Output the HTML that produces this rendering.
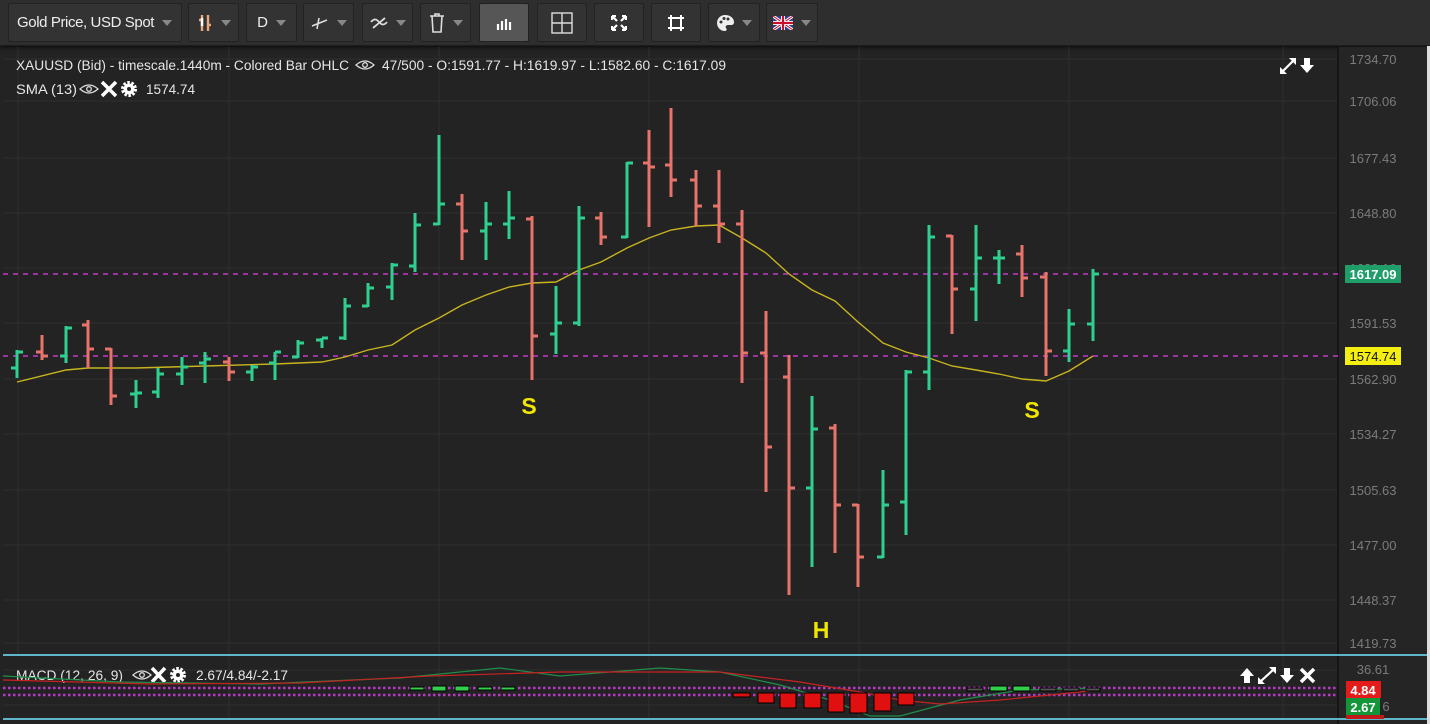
<!DOCTYPE html>
<html><head><meta charset="utf-8"><style>
*{margin:0;padding:0;box-sizing:border-box}
body{width:1430px;height:724px;background:#232323;overflow:hidden;font-family:"Liberation Sans",sans-serif;position:relative}
.tb{position:absolute;left:0;top:0;width:1430px;height:46px;background:#2e2e2e;border-bottom:1px solid #1c1c1c;box-shadow:0 2px 3px #111}
.b{position:absolute;top:3px;height:39px;background:#333;border:1px solid #222;border-radius:2px;color:#eee;font-size:15px;display:flex;align-items:center;justify-content:center}
.car{display:inline-block;width:0;height:0;border-left:5px solid transparent;border-right:5px solid transparent;border-top:6px solid #888;margin-left:8px}
.rs{position:absolute;right:0;top:46px;width:3px;height:678px;background:#ddd}
</style></head><body>
<div class="tb">
<div class="b" style="left:8px;width:174px;justify-content:flex-start;padding-left:8px;letter-spacing:-0.4px">Gold Price, USD Spot<span class="car"></span></div>
<div class="b" style="left:188px;width:51px"><svg width="16" height="18"><path d="M5 1V17M11 1V17M2 6H5M11 11H14" stroke="#e9a77a" stroke-width="2.4"/><path d="M5 4V12" stroke="#fff" stroke-width="2.4"/></svg><span class="car"></span></div>
<div class="b" style="left:246px;width:51px">D<span class="car"></span></div>
<div class="b" style="left:303px;width:51px"><svg width="18" height="14"><path d="M1 10L16 4M8 2L6 13" stroke="#ddd" stroke-width="1.6"/></svg><span class="car"></span></div>
<div class="b" style="left:362px;width:51px"><svg width="18" height="14"><path d="M1 6Q5 1 9 6T17 6M3 12L15 2" stroke="#ddd" stroke-width="1.8" fill="none"/></svg><span class="car"></span></div>
<div class="b" style="left:420px;width:51px"><svg width="16" height="20"><path d="M1 3H15M3 3L4 19H12L13 3M6 3V1H10V3" stroke="#ddd" stroke-width="1.6" fill="none"/></svg><span class="car"></span></div>
<div class="b" style="left:479px;width:50px;background:#565656"><svg width="16" height="14"><path d="M2 8V14M6 5V14M10 3V14M14 6V14" stroke="#fff" stroke-width="2.2"/></svg></div>
<div class="b" style="left:537px;width:50px"><svg width="22" height="22"><rect x="1" y="1" width="20" height="20" fill="none" stroke="#ddd" stroke-width="1.4"/><path d="M11 1V21M1 11H21" stroke="#ddd" stroke-width="1.4"/></svg></div>
<div class="b" style="left:594px;width:50px"><svg width="16" height="16"><path d="M1 1L6 6M15 1L10 6M1 15L6 10M15 15L10 10M1 1H5M1 1V5M15 1H11M15 1V5M1 15H5M1 15V11M15 15H11M15 15V11" stroke="#fff" stroke-width="2.2"/></svg></div>
<div class="b" style="left:651px;width:50px"><svg width="18" height="18"><rect x="4" y="4" width="10" height="10" fill="none" stroke="#fff" stroke-width="2"/><path d="M1 4H4V1M14 1V4H17M17 14H14V17M4 17V14H1" stroke="#fff" stroke-width="2" fill="none"/></svg></div>
<div class="b" style="left:708px;width:52px"><svg width="18" height="18"><path d="M9 1C4 1 1 5 1 9s3 8 8 8c2 0 2-2 1-3s0-3 2-3h3c2 0 3-1 3-3C18 4 14 1 9 1z" fill="#eee"/><circle cx="5" cy="8" r="1.5" fill="#333"/><circle cx="8" cy="4.5" r="1.5" fill="#333"/><circle cx="12" cy="5" r="1.5" fill="#333"/></svg><span class="car"></span></div>
<div class="b" style="left:766px;width:52px"><svg width="20" height="14"><rect width="20" height="14" fill="#27408b"/><path d="M0 0L20 14M20 0L0 14" stroke="#fff" stroke-width="3"/><path d="M0 0L20 14M20 0L0 14" stroke="#c8102e" stroke-width="1"/><path d="M10 0V14M0 7H20" stroke="#fff" stroke-width="4"/><path d="M10 0V14M0 7H20" stroke="#c8102e" stroke-width="2.2"/></svg><span class="car"></span></div>
</div>
<svg width="1430" height="724" style="position:absolute;left:0;top:0" font-family="Liberation Sans,sans-serif">
<rect x="1338" y="47" width="90" height="677" fill="#252525"/>
<g stroke="#2f2f2f" stroke-width="1">
<path d="M3 59H1338M3 101H1338M3 158H1338M3 213H1338M3 268H1338M3 323H1338M3 379H1338M3 434H1338M3 490H1338M3 545H1338M3 600H1338M3 643H1338"/>
<path d="M18 47V655M229 47V655M439 47V655M649 47V655M859 47V655M1069 47V655M1283 47V655M229 657V718M439 657V718M649 657V718M859 657V718M1069 657V718M1283 657V718"/>
<path d="M3 670H1338M3 705H1338"/>
</g>
<path d="M1338 47V724" stroke="#111" stroke-width="1.5"/>
<g stroke="#c23bc8" stroke-width="1.6" stroke-dasharray="5 5"><path d="M3 274H1338M3 356H1338"/></g>
<polyline fill="none" stroke="#c8b41e" stroke-width="1.4" points="17,382 66,370 88,368 136,368 205,366 275,364 322,362 345,357 368,350 392,345 415,330 439,318 462,305 486,295 509,287 532,283 556,282 579,270 601,262 627,248 649,238 671,230 696,226 719,225 742,238 766,253 789,274 812,290 835,301 858,322 883,343 906,352 929,358 952,366 976,370 999,374 1022,379 1046,381 1069,371 1093,356"/>
<path fill="none" stroke="#2fd08f" stroke-width="3" d="M17 350V378M11 368h6M17 352h6M66 326V363M60 356h6M66 328h6M136 380V408M130 394h6M136 393h6M158 368V398M152 392h6M158 374h6M182 357V385M176 374h6M182 367h6M205 352V383M199 363h6M205 359h6M252 365V381M246 372h6M252 367h6M275 352V380M269 363h6M275 352h6M298 340V358M292 357h6M298 343h6M322 338V348M316 340h6M322 338h6M345 298V340M339 338h6M345 306h6M368 283V307M362 306h6M368 288h6M392 263V300M386 287h6M392 265h6M415 213V272M409 266h6M415 225h6M439 135V225M433 224h6M439 204h6M486 202V260M480 231h6M486 224h6M509 191V239M503 224h6M509 218h6M556 286V354M550 334h6M556 323h6M579 206V326M573 323h6M579 218h6M627 162V238M621 237h6M627 163h6M812 396V567M806 488h6M812 429h6M883 470V558M877 557h6M883 505h6M906 370V535M900 502h6M906 372h6M929 225V390M923 372h6M929 237h6M976 225V321M970 289h6M976 258h6M999 250V284M993 258h6M999 258h6M1069 309V362M1063 351h6M1069 324h6M1093 269V341M1087 324h6M1093 274h6"/>
<path fill="none" stroke="#e8736b" stroke-width="3" d="M42 335V360M36 352h6M42 356h6M88 320V368M82 325h6M88 349h6M111 348V405M105 349h6M111 396h6M229 357V381M223 362h6M229 372h6M462 194V260M456 204h6M462 231h6M532 216V380M526 219h6M532 336h6M601 212V245M595 218h6M601 237h6M649 130V227M643 163h6M649 167h6M671 108V197M665 165h6M671 180h6M696 170V226M690 180h6M696 206h6M719 170V243M713 206h6M719 224h6M742 210V383M736 224h6M742 353h6M766 311V492M760 353h6M766 447h6M789 355V595M783 377h6M789 488h6M835 424V553M829 428h6M835 505h6M858 504V587M852 505h6M858 557h6M952 235V334M946 236h6M952 289h6M1022 245V297M1016 254h6M1022 278h6M1046 272V376M1040 277h6M1046 351h6"/>
<g fill="#f2e600" font-weight="bold" font-size="23" text-anchor="middle"><text x="529" y="414">S</text><text x="1032" y="418">S</text><text x="821" y="638">H</text></g>
<g fill="#e6e6e6" font-size="13.5">
<text x="16" y="70" textLength="333" lengthAdjust="spacingAndGlyphs">XAUUSD (Bid) - timescale.1440m - Colored Bar OHLC</text>
<text x="382" y="70" textLength="344" lengthAdjust="spacingAndGlyphs">47/500 - O:1591.77 - H:1619.97 - L:1582.60 - C:1617.09</text>
<text x="16" y="94" textLength="61" lengthAdjust="spacingAndGlyphs">SMA (13)</text>
<text x="146" y="94" textLength="49" lengthAdjust="spacingAndGlyphs">1574.74</text>
<text x="16" y="680" textLength="107" lengthAdjust="spacingAndGlyphs">MACD (12, 26, 9)</text>
<text x="196" y="680" textLength="92" lengthAdjust="spacingAndGlyphs">2.67/4.84/-2.17</text>
</g>
<g fill="none" stroke="#ddd" stroke-width="1.3"><path d="M356 65Q365 57 374 65Q365 73 356 65Z"/><circle cx="365" cy="65" r="2.3"/><path d="M80 89Q89 81 98 89Q89 97 80 89Z"/><circle cx="89" cy="89" r="2.3"/><path d="M133 675Q142 667 151 675Q142 683 133 675Z"/><circle cx="142" cy="675" r="2.3"/></g>
<g stroke="#fff" stroke-width="3.5"><path d="M102 82L116 96M116 82L102 96M152 668L165 682M165 668L152 682M1301 669L1314 682M1314 669L1301 682"/></g>
<g fill="#fff"><circle cx="129" cy="89" r="5.5"/><circle cx="178" cy="675" r="5.5"/></g>
<g stroke="#fff" stroke-width="3" stroke-dasharray="2.5 1.6"><circle cx="129" cy="89" r="6.5" fill="none"/><circle cx="178" cy="675" r="6.5" fill="none"/></g>
<g fill="#222"><circle cx="129" cy="89" r="2"/><circle cx="178" cy="675" r="2"/></g>
<g fill="#fff">
<path d="M1280 74L1280 67L1287 74Z M1296 58L1296 65L1289 58Z"/>
<path d="M1304 58h6v7h4l-7 8l-7-8h4z"/>
<path d="M1250 683v-7h4l-7-8-7 8h4v7z"/>
<path d="M1258 684L1258 677L1265 684Z M1276 667L1276 674L1269 667Z"/>
<path d="M1284 668h6v7h4l-7 8-7-8h4z"/>
</g>
<g stroke="#fff" stroke-width="2.2"><path d="M1283 71L1293 61M1261 681L1273 670"/></g>
<path d="M3 655H1338M3 719H1338" stroke="#5fb6c8" stroke-width="2"/>
<path d="M1338 655H1428M1338 719H1428" stroke="#5fb6c8" stroke-width="2"/>
<g stroke="#b63ac2" stroke-width="2.5" stroke-dasharray="2.5 2.5"><path d="M3 688H1338M3 695H1338"/></g>
<polyline fill="none" stroke="#1f8e4a" stroke-width="1.2" points="3,676 120,682 260,684 400,678 500,668 560,676 660,668 720,672 780,685 830,700 870,716 900,716 960,700 1020,690 1100,688"/>
<polyline fill="none" stroke="#c62222" stroke-width="1.2" points="3,680 150,684 300,683 430,676 560,672 720,672 800,682 860,692 900,700 940,704 1000,700 1100,690"/>
<g fill="#e01010" stroke="#000" stroke-width="1"><rect x="733" y="693" width="17" height="4"/><rect x="758" y="693" width="16" height="10"/><rect x="780" y="693" width="16" height="15"/><rect x="804" y="693" width="17" height="15"/><rect x="828" y="693" width="16" height="19"/><rect x="850" y="693" width="17" height="20"/><rect x="874" y="693" width="17" height="18"/><rect x="898" y="693" width="16" height="12"/></g>
<g fill="#32d04a" stroke="#000" stroke-width="1"><rect x="990" y="686" width="17" height="5"/><rect x="1013" y="686" width="17" height="5"/><rect x="432" y="686" width="14" height="5"/><rect x="455" y="686" width="14" height="5"/><rect x="410" y="687" width="14" height="3"/><rect x="478" y="687" width="14" height="3"/><rect x="501" y="687" width="14" height="3"/></g>
<g fill="#555" stroke="#000" stroke-width="1"><rect x="1040" y="688" width="16" height="3"/><rect x="1063" y="688" width="16" height="3"/><rect x="1086" y="688" width="14" height="3"/><rect x="967" y="688" width="16" height="3"/></g>
<g fill="#7b7b7b" font-size="13" text-anchor="middle">
<text x="1373" y="64">1734.70</text><text x="1373" y="106">1706.06</text><text x="1373" y="163">1677.43</text><text x="1373" y="218">1648.80</text><text x="1373" y="273">1620.16</text><text x="1373" y="328">1591.53</text><text x="1373" y="384">1562.90</text><text x="1373" y="439">1534.27</text><text x="1373" y="495">1505.63</text><text x="1373" y="550">1477.00</text><text x="1373" y="605">1448.37</text><text x="1373" y="648">1419.73</text><text x="1373" y="674">36.61</text><text x="1386" y="711">6</text>
</g>
<rect x="1345" y="265" width="56" height="18" fill="#1f9e6a"/>
<text x="1373" y="279" fill="#fff" font-size="13" font-weight="bold" text-anchor="middle">1617.09</text>
<rect x="1345" y="347" width="56" height="18" fill="#f4ef10"/>
<text x="1373" y="361" fill="#111" font-size="13" text-anchor="middle">1574.74</text>
<rect x="1346" y="681" width="35" height="17" fill="#e41b1b"/>
<text x="1363" y="695" fill="#fff" font-size="13" font-weight="bold" text-anchor="middle">4.84</text>
<rect x="1346" y="698" width="34" height="17" fill="#13963a"/>
<text x="1363" y="712" fill="#fff" font-size="13" font-weight="bold" text-anchor="middle">2.67</text>
<rect x="1346" y="715" width="38" height="4" fill="#c21a1a"/>
</svg>
<div class="rs"></div>
</body></html>
